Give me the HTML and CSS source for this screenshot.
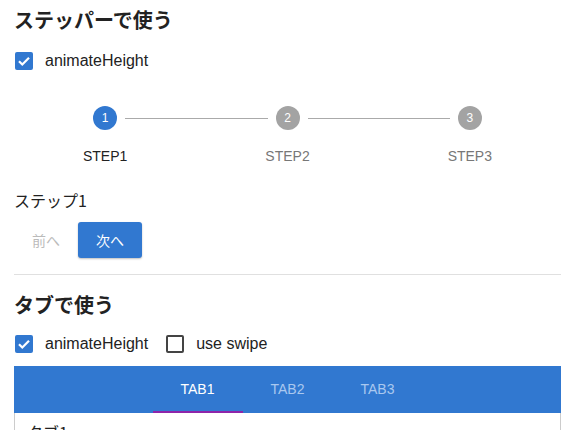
FILE: index.html
```html
<!DOCTYPE html>
<html lang="ja">
<head>
<meta charset="utf-8">
<link rel="stylesheet" href="styles.css">
</head>
<body>
<div class="page">
  <h2 class="title t1">ステッパーで使う</h2>
  <div class="checks c1">
    <label class="check"><span class="box on"><svg viewBox="0 0 18 18" width="18" height="18"><path d="M4 9.2l3.3 3.3L14 5.8" fill="none" stroke="#fff" stroke-width="2.2"/></svg></span><span class="lbl">animateHeight</span></label>
  </div>
  <div class="stepper">
    <div class="step active">
      <div class="track"><span class="line left hidden"></span><span class="dot">1</span><span class="line right"></span></div>
      <div class="slabel">STEP1</div>
    </div>
    <div class="step">
      <div class="track"><span class="line left"></span><span class="dot">2</span><span class="line right"></span></div>
      <div class="slabel">STEP2</div>
    </div>
    <div class="step">
      <div class="track"><span class="line left"></span><span class="dot">3</span><span class="line right hidden"></span></div>
      <div class="slabel">STEP3</div>
    </div>
  </div>
  <div class="stepcontent">ステップ1</div>
  <div class="buttons">
    <button class="btn disabled">前へ</button>
    <button class="btn primary">次へ</button>
  </div>
  <hr class="divider">
  <h2 class="title t2">タブで使う</h2>
  <div class="checks c2">
    <label class="check"><span class="box on"><svg viewBox="0 0 18 18" width="18" height="18"><path d="M4 9.2l3.3 3.3L14 5.8" fill="none" stroke="#fff" stroke-width="2.2"/></svg></span><span class="lbl">animateHeight</span></label>
    <label class="check"><span class="box off"></span><span class="lbl">use swipe</span></label>
  </div>
  <div class="tabs">
    <div class="tabbar">
      <div class="tab active">TAB1</div>
      <div class="tab">TAB2</div>
      <div class="tab">TAB3</div>
    </div>
    <div class="tabpanel">タブ1</div>
  </div>
</div>
</body>
</html>
```
FILE: styles.css
```css
html, body {
  margin: 0;
  padding: 0;
  background: #fff;
  overflow: hidden;
}
body {
  font-family: "Liberation Sans", Arial, "Noto Sans CJK JP", sans-serif;
  color: #222;
}
.page {
  padding: 0 15px 0 14px;
}
.title {
  margin: 0;
  font-size: 20px;
  font-weight: bold;
  line-height: 28px;
  font-family: "Liberation Sans", "Noto Sans CJK JP", sans-serif;
  color: #222;
}
.t1 { padding-top: 7px; }
.t2 { padding-top: 17px; }
.checks {
  display: flex;
  gap: 17px;
  height: 18px;
  align-items: center;
}
.c1 { margin-top: 17px; }
.c2 { margin-top: 15px; }
.check {
  display: flex;
  align-items: center;
  font-size: 16px;
  color: #222;
}
.box {
  width: 18px;
  height: 18px;
  box-sizing: border-box;
  border-radius: 2px;
  margin-left: 1px;
  margin-right: 12px;
  display: block;
}
.box svg { display: block; }
.box.on { background: #3178d0; }
.box.off { border: 2px solid #444; }
.stepper {
  display: flex;
  margin-top: 36px;
}
.step {
  flex: 1;
  display: flex;
  flex-direction: column;
  align-items: center;
}
.track {
  display: flex;
  align-items: center;
  width: 100%;
  height: 24px;
}
.line {
  flex: 1;
  height: 1px;
  background: #aaa;
}
.line.left { margin-right: 8px; }
.line.right { margin-left: 8px; }
.line.hidden { visibility: hidden; }
.dot {
  width: 24px;
  height: 24px;
  border-radius: 50%;
  background: #a3a3a3;
  color: #fff;
  font-size: 12px;
  display: flex;
  align-items: center;
  justify-content: center;
}
.step.active .dot { background: #3178d0; }
.slabel {
  margin-top: 18px;
  font-size: 14px;
  color: #777;
  line-height: 16px;
}
.step.active .slabel { color: #222; }
.stepcontent {
  margin-top: 25px;
  font-size: 16px;
  line-height: 22px;
  color: #222;
  font-family: "Noto Sans CJK JP", sans-serif;
}
.buttons {
  display: flex;
  gap: 0;
  margin-top: 11px;
}
.btn {
  font-family: "Noto Sans CJK JP", sans-serif;
  font-size: 14px;
  height: 36px;
  border: none;
  border-radius: 3px;
  padding: 0 17px;
  background: transparent;
}
.btn.disabled { color: #bbb; width: 64px; }
.btn.primary {
  background: #3178d0;
  color: #fff;
  width: 64px;
  box-shadow: 0 1px 2px rgba(0,0,0,0.25);
}
.divider {
  border: none;
  border-top: 1px solid #e0e0e0;
  margin: 16px 0 0;
}
.tabs {
  margin-top: 13px;
}
.tabbar {
  background: #3178d0;
  height: 47px;
  display: flex;
  justify-content: center;
}
.tab {
  width: 90px;
  text-align: center;
  color: #a9c8ef;
  font-size: 14px;
  line-height: 46px;
  box-sizing: border-box;
}
.tab.active {
  color: #fff;
  border-bottom: 2px solid #8e24aa;
}
.tabpanel {
  border: 1px solid #ccc;
  border-top: none;
  padding: 7px 12px;
  font-size: 16px;
  font-family: "Noto Sans CJK JP", sans-serif;
  height: 60px;
}
```
